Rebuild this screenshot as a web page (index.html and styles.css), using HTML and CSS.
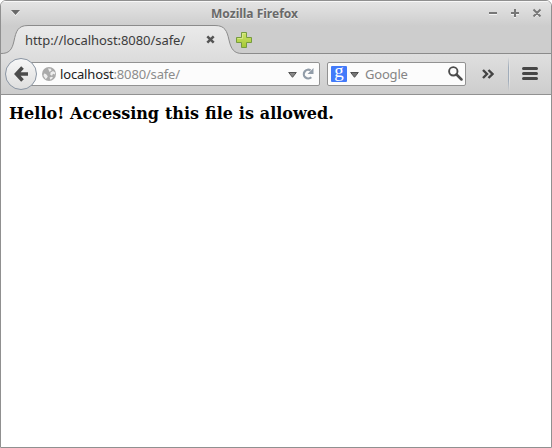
FILE: index.html
```html
<!DOCTYPE html>
<html lang="en">
<head>
<meta charset="utf-8">
<title>Mozilla Firefox</title>
<link rel="stylesheet" href="styles.css">
</head>
<body>
<div class="window">
  <div class="chrome">
    <header class="titlebar">
      <svg class="menu-arrow" width="9" height="6" viewBox="0 0 9 6"><path d="M0 1h9L4.500 6z" fill="#f5f5f5"/><path d="M0 0h9L4.500 5z" fill="#686868"/></svg>
      <h1 class="title">Mozilla Firefox</h1>
      <svg class="controls" width="54" height="12" viewBox="0 0 54 12">
        <g fill="none" stroke="#f4f4f4" stroke-width="2" transform="translate(0 1)"><path d="M1 6h8M23 6h8M27 2v8M46 2l6.500 7M52.500 2L46 9"/></g>
        <g fill="none" stroke="#777" stroke-width="2"><path d="M1 6h8M23 6h8M27 2v8M45.500 2.500l7 7M52.500 2.500l-7 7"/></g>
      </svg>
    </header>
    <div class="tabstrip">
      <svg class="tab-shape" width="550" height="29" viewBox="0 0 550 29">
        <defs><linearGradient id="tabfill" x1="0" y1="0" x2="0" y2="1"><stop offset="0" stop-color="#eaeaea"/><stop offset="1" stop-color="#dfdfdf"/></linearGradient></defs>
        <path d="M0 28.500C8 28.500 11 25 13 16C15 6 17 .5 27 .5H214C224 .5 226 6 228 15C230 24 233 28.500 241 28.500V29H0z" fill="url(#tabfill)"/>
        <path d="M0 28.500C8 28.500 11 25 13 16C15 6 17 .5 27 .5H214C224 .5 226 6 228 15C230 24 233 28.500 241 28.500H550" fill="none" stroke="#8b8b8b"/>
      </svg>
      <div class="tab">
        <span class="tab-label">http://localhost:8080/safe/</span>
        <svg width="9" height="9" viewBox="0 0 9 9"><path d="M1.300 1.300l6.400 6.400M7.700 1.300L1.300 7.700" stroke="#555" stroke-width="2.500"/></svg>
      </div>
      <svg class="new-tab" width="17" height="17" viewBox="0 0 17 17">
        <defs><linearGradient id="plusfill" x1="0" y1="0" x2="0" y2="1"><stop offset="0" stop-color="#cde46a"/><stop offset="1" stop-color="#a5c834"/></linearGradient></defs>
        <path d="M5.500 .5h5v5h5v5h-5v5h-5v-5h-5v-5h5z" fill="url(#plusfill)" stroke="#769b40"/><path d="M6.500 6.500v-5h3M1.500 6.500h5" fill="none" stroke="#dcec91" stroke-width=".8"/>
      </svg>
    </div>
    <nav class="navbar">
      <button class="back" aria-label="Back"><svg width="15" height="16" viewBox="0 0 15 16"><path d="M8.500 1.500L2.500 8l6 6.500M3 8h11" fill="none" stroke="#4b4b4b" stroke-width="3.600"/></svg></button>
      <div class="address">
        <svg class="globe" width="14" height="14" viewBox="0 0 14 14"><circle cx="7" cy="7" r="7" fill="#aaa"/><path d="M6 1.500l3 .3 .5 1.700-2 1.500zM8.500 5.500l2.500-1.500 2 1.500v2l-2-.7-1 2-1.700-1zM2 6.500l2 .5 1.800 2.200L5 11l-1.500 1-2-3.200zM7.500 10.500l2.500-.7 1 1-2.500 2z" fill="#ededed"/></svg>
        <span class="url"><b>localhost</b>:8080/safe/</span>
        <svg class="drop" width="9" height="6" viewBox="0 0 9 6"><path d="M.7.5h7.600L4.500 5.300z" fill="#888" stroke="#555"/></svg>
        <svg class="reload" width="12" height="12" viewBox="0 0 12 12"><path d="M8.600 2.400A4.400 4.400 0 1 0 9.300 9.300" fill="none" stroke="#929da9" stroke-width="2.200"/><path d="M11.500 0v6h-6z" fill="#929da9"/></svg>
      </div>
      <div class="search">
        <span class="engine">g</span>
        <svg class="engine-drop" width="9" height="6" viewBox="0 0 9 6"><path d="M.7.5h7.600L4.500 5.300z" fill="#777" stroke="#505050"/></svg>
        <span class="placeholder">Google</span>
        <svg class="lens" width="15" height="15" viewBox="0 0 15 15"><circle cx="5.300" cy="5.300" r="4.200" fill="none" stroke="#4c4c4c" stroke-width="1.900"/><path d="M8.500 8.500l5 5" stroke="#4c4c4c" stroke-width="2.500" stroke-linecap="round"/></svg>
      </div>
      <svg class="more" width="12" height="10" viewBox="0 0 12 10"><path d="M1 1l4 4-4 4M6.500 1l4 4-4 4" fill="none" stroke="#444" stroke-width="2.400"/></svg>
      <span class="divider"></span>
      <svg class="hamburger" width="16" height="13" viewBox="0 0 16 13"><path d="M1.500 1.500h13M1.500 6.500h13M1.500 11.500h13" stroke="#464646" stroke-width="3" stroke-linecap="round"/></svg>
    </nav>
  </div>
  <main class="page"><p class="message">Hello! Accessing this file is allowed.</p></main>
</div>
</body>
</html>
```

FILE: styles.css
```css
* { box-sizing: border-box; }
body {
  margin: 0;
  background: #fff;
  font-family: "Noto Sans", "Open Sans", sans-serif;
  font-size: 13px;
}
svg { display: block; flex: none; }
.window {
  width: 552px;
  height: 448px;
  border: 1px solid #909090;
  border-radius: 6px 6px 0 0;
  overflow: hidden;
  background: #fff;
}
.chrome {
  height: 94px;
  border-bottom: 1px solid #919191;
  background: linear-gradient(#e5e5e5, #cdcdcd 25px, #cdcdcd);
  box-shadow: inset 0 1px #f8f8f8;
}
.titlebar {
  height: 24px;
  display: flex;
  align-items: center;
  justify-content: space-between;
  padding: 0 9px 0 10px;
}
.menu-arrow { margin-right: 45px; }
.title {
  margin: 0 44px 0 0;
  padding-top: 2px;
  color: #696969;
  font: bold 12px/22px "Noto Sans", sans-serif;
  text-shadow: 0 1px #f3f3f3;
}
.tabstrip {
  position: relative;
  height: 29px;
  display: flex;
  align-items: center;
}
.tab-shape { position: absolute; left: 0; top: 0; }
.tab {
  position: relative;
  width: 190px;
  height: 29px;
  margin-left: 24px;
  display: flex;
  align-items: center;
  justify-content: space-between;
  color: #3c3c3c;
}
.tab-label { letter-spacing: -.06px; }
.new-tab { position: relative; margin: 1px 0 0 21px; }
.navbar {
  height: 40px;
  display: flex;
  align-items: center;
  background: linear-gradient(#dfdfdf, #cdcdcd);
}
.back {
  position: relative;
  z-index: 1;
  width: 32px;
  height: 32px;
  margin: 0 -16px 0 4px;
  padding: 0 0 0 1px;
  display: flex;
  align-items: center;
  justify-content: center;
  border: 1px solid #8a95a3;
  border-radius: 50%;
  background: linear-gradient(#f7f7f7, #dedede);
}
.address, .search {
  height: 24px;
  display: flex;
  align-items: center;
  border: 1px solid #929292;
  border-radius: 2px;
  background: #fcfcfc;
}
.address { width: 299px; padding: 0 5px 0 20px; }
.url { margin-left: 4px; color: #8c8c8c; letter-spacing: -.16px; }
.url b { color: #222; font-weight: normal; }
.drop { margin: 2px 0 0 auto; }
.reload { margin-left: 5px; }
.search { width: 139px; margin-left: 7px; padding: 0 2px 0 3px; }
.engine {
  width: 16px;
  height: 16px;
  border-radius: 1px;
  background: #427afa;
  color: #fff;
  font: 19px/9px "Liberation Serif", serif;
  text-align: center;
}
.engine-drop { margin: 2px 0 0 3px; }
.placeholder { margin-left: 6px; color: #858585; letter-spacing: -.2px; }
.lens { margin: -1px 0 0 auto; }
.more { margin-left: 16px; }
.divider {
  width: 2px;
  height: 34px;
  margin-left: 14px;
  background: linear-gradient(90deg, #a0acba 50%, #e3e3e3 50%);
  -webkit-mask-image: linear-gradient(transparent, #000 30%, #000 70%, transparent);
}
.hamburger { margin: -1px 0 0 12px; }
.page { padding: 9px 8px 8px; }
.message {
  margin: 0;
  color: #000;
  font: bold 16px/19px "DejaVu Serif", serif;
  word-spacing: .35px;
}
```
